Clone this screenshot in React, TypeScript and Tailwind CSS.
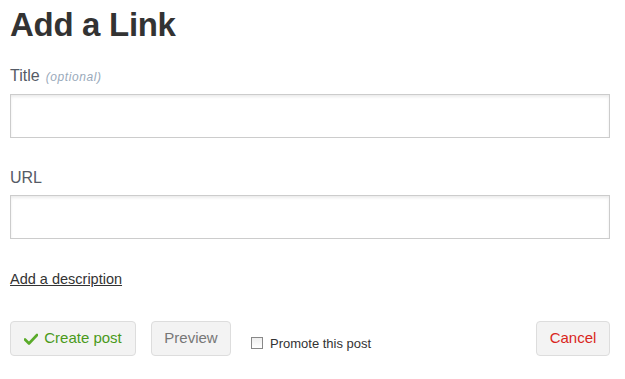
export default function App() {
  return (
    <div className="h-[379px] w-[625px] bg-white px-[10px] pr-[15px] font-['Liberation_Sans',Arial,sans-serif] text-[#333]">
      <h1 className="pt-[6px] text-[33px] font-bold leading-[38px] tracking-[-0.3px] text-[#333]">Add a Link</h1>

      <div className="mt-[22px] flex items-baseline gap-[6px]">
        <span className="text-[16px] leading-[20px] text-[#555b66]">Title</span>
        <span className="text-[12px] italic tracking-[0.6px] text-[#9aaabb]">(optional)</span>
      </div>
      <div className="mt-[8px] h-[44px] w-full border border-[#ccc] bg-white shadow-[inset_0_2px_3px_rgba(0,0,0,0.08)]" />

      <div className="mt-[30px] text-[16px] leading-[20px] text-[#555b66]">URL</div>
      <div className="mt-[7px] h-[44px] w-full border border-[#ccc] bg-white shadow-[inset_0_2px_3px_rgba(0,0,0,0.08)]" />

      <div className="mt-[31px] leading-[18px]">
        <a className="text-[14.5px] text-[#333] underline">Add a description</a>
      </div>

      <div className="mt-[33px] flex items-start">
        <button className="flex h-[35px] w-[126px] items-center justify-center gap-[6px] rounded-[4px] border border-[#ddd] bg-[#f3f3f3] text-[15px] text-[#4a9a1a]">
          <svg width="14" height="12" viewBox="0 0 14 12">
            <path d="M1 6.5 L5 10.5 L13 2" fill="none" stroke="#5aab2a" strokeWidth="2.6" strokeLinecap="round" strokeLinejoin="round" />
          </svg>
          Create post
        </button>
        <button className="ml-[15px] h-[35px] w-[80px] rounded-[4px] border border-[#ddd] bg-[#f3f3f3] text-[15px] text-[#777]">Preview</button>
        <label className="ml-[20px] mt-[12px] flex items-center gap-[7px] text-[13px] leading-[16px] text-[#333]">
          <span className="h-[12px] w-[12px] border border-[#888] bg-gradient-to-b from-[#eee] to-[#fff]" />
          <span className="mt-[3px]">Promote this post</span>
        </label>
        <button className="ml-auto h-[35px] w-[74px] rounded-[4px] border border-[#ddd] bg-[#f3f3f3] text-[15px] text-[#d9261c]">Cancel</button>
      </div>
    </div>
  )
}
